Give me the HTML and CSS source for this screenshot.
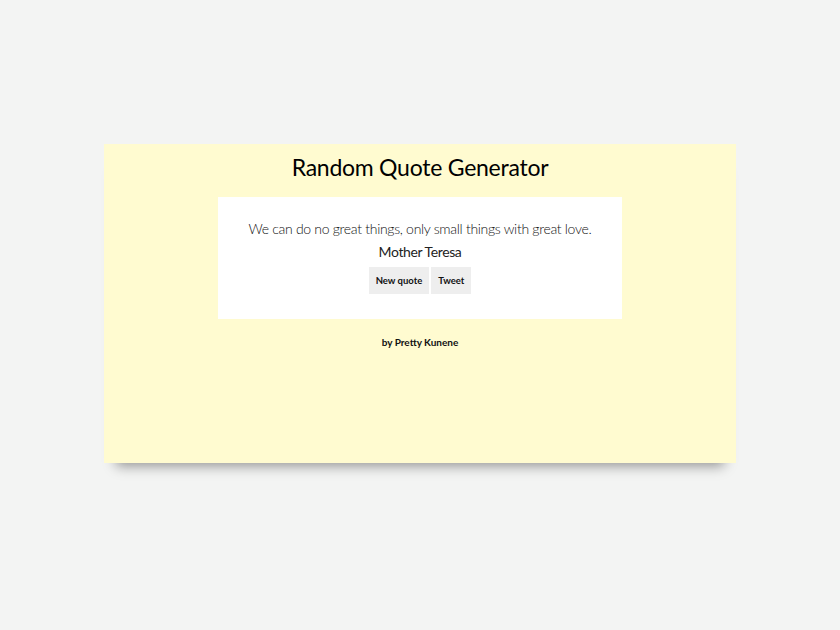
FILE: index.html
```html
<!DOCTYPE html>
<html>
<head>
<meta charset="utf-8">
<link rel="stylesheet" href="styles.css">
<title>Random Quote Generator</title>
</head>
<body>
<main class="card">
  <h1 class="title">Random Quote Generator</h1>
  <section class="quote-box">
    <p class="quote">We can do no great things, only small things with great love.</p>
    <p class="author">Mother Teresa</p>
    <div class="actions">
      <button class="btn">New quote</button>
      <button class="btn">Tweet</button>
    </div>
  </section>
  <p class="credit">by Pretty Kunene</p>
</main>
</body>
</html>
```
FILE: styles.css
```css
html, body {
  margin: 0;
  padding: 0;
}
html {
  background: #f3f4f3;
}
body {
  min-height: 100vh;
  box-sizing: border-box;
  background: #f3f4f3;
  font-family: Lato, "Open Sans", "Liberation Sans", sans-serif;
  color: #111;
  padding-top: 144px;
}
.card {
  width: 632px;
  height: 319px;
  margin: 0 0 0 104px;
  background: #fffbd0;
  box-sizing: border-box;
  padding-top: 11px;
  display: flex;
  flex-direction: column;
  align-items: center;
  box-shadow: 0 15px 12px -12px rgba(0,0,0,0.4);
}
.title {
  margin: 0;
  font-size: 23px;
  font-weight: 400;
  line-height: 24px;
  letter-spacing: -0.25px;
  color: #000;
}
.quote-box {
  margin-top: 18px;
  width: 404px;
  height: 122px;
  background: #fff;
  box-sizing: border-box;
  padding-top: 22px;
  display: flex;
  flex-direction: column;
  align-items: center;
}
.quote {
  margin: 0;
  font-size: 14px;
  font-weight: 300;
  line-height: 20px;
  letter-spacing: -0.3px;
  color: #111;
}
.author {
  margin: 3px 0 0;
  font-size: 14px;
  line-height: 20px;
  letter-spacing: -0.4px;
  color: #222;
}
.actions {
  margin-top: 5px;
  display: flex;
  gap: 2px;
}
.btn {
  border: none;
  background: #eeeeee;
  font-family: inherit;
  font-size: 9.5px;
  font-weight: 700;
  color: #111;
  height: 27px;
  padding: 0 7px;
}
.credit {
  margin: 17px 0 0;
  font-size: 10px;
  font-weight: 700;
  color: #111;
}
```
